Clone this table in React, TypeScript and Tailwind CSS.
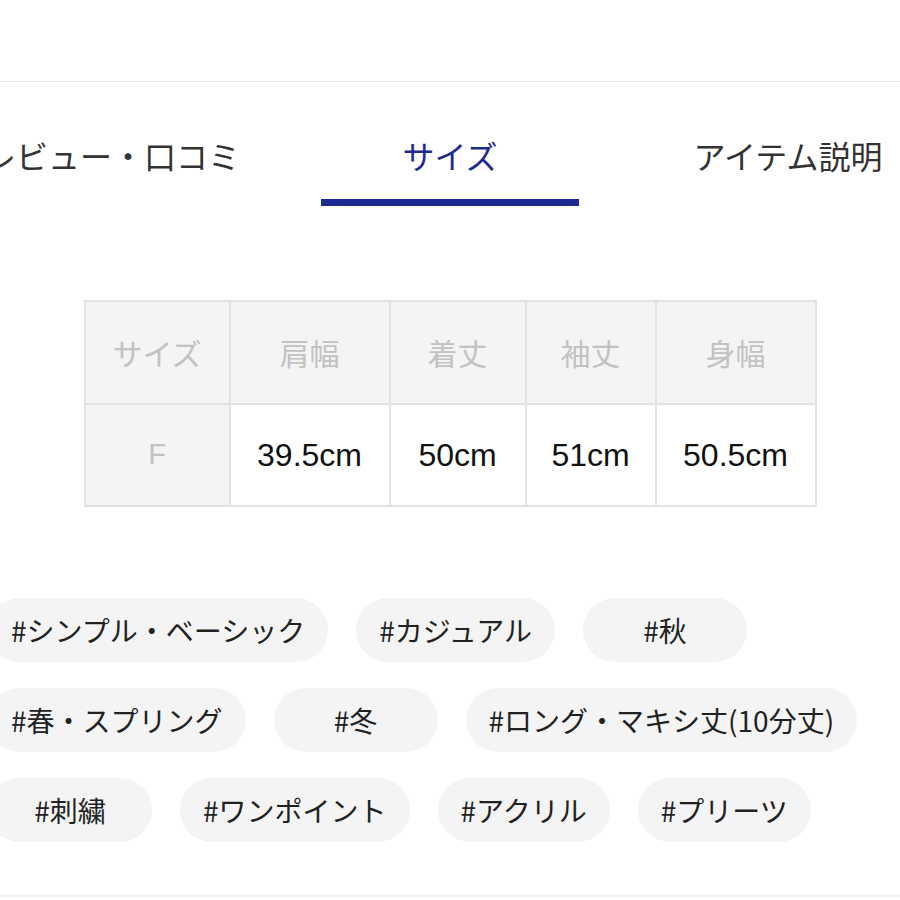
const tabs = ['レビュー・口コミ', 'サイズ', 'アイテム説明'];

const headers = ['サイズ', '肩幅', '着丈', '袖丈', '身幅'];
const values = ['39.5cm', '50cm', '51cm', '50.5cm'];

const tagRows = [
  ['#シンプル・ベーシック', '#カジュアル', '#秋'],
  ['#春・スプリング', '#冬', '#ロング・マキシ丈(10分丈)'],
  ['#刺繍', '#ワンポイント', '#アクリル', '#プリーツ'],
];

function Tag({ label }: { label: string }) {
  return (
    <div className="h-[64px] min-w-[164px] px-[23px] rounded-full bg-[#f4f4f4] flex items-center justify-center shrink-0">
      <span className="text-[28px] leading-none text-[#222]">{label}</span>
    </div>
  );
}

export default function App() {
  return (
    <div className="w-[900px] h-[900px] overflow-hidden bg-white font-['Noto_Sans_CJK_JP',sans-serif]">
      <div className="h-[81px]" />
      <div className="border-t border-[#e6e6e6]" />

      {/* tabs */}
      <div className="flex justify-center pt-[57px]">
        {tabs.map((t, i) => (
          <div key={t} className="w-[338px] shrink-0 flex flex-col items-center">
            <span className={`text-[32px] leading-none whitespace-nowrap ${i === 1 ? 'text-[#1e2b8f]' : 'text-[#333]'}`}>{t}</span>
            <div className={`mt-[28px] h-[7px] w-[258px] ${i === 1 ? 'bg-[#1a2a91]' : 'bg-transparent'}`} />
          </div>
        ))}
      </div>

      {/* size table */}
      <div className="flex justify-center mt-[94px]">
        <div className="grid grid-cols-[143px_158px_134px_128px_158px] grid-rows-[101px_100px] gap-[2px] p-[2px] bg-[#e2e2e2]">
          {headers.map((h) => (
            <div key={h} className="bg-[#f4f4f4] flex items-center justify-center text-[30px] text-[#c2c2c2]">
              {h}
            </div>
          ))}
          <div className="bg-[#f4f4f4] flex items-center justify-center text-[29px] text-[#c2c2c2] font-['Liberation_Sans',sans-serif]">
            F
          </div>
          {values.map((v) => (
            <div key={v} className="bg-white flex items-center justify-center text-[32px] text-[#111] font-['Liberation_Sans',sans-serif]">
              {v}
            </div>
          ))}
        </div>
      </div>

      {/* tags */}
      <div className="mt-[91px] ml-[-12px] flex flex-col gap-[26px]">
        {tagRows.map((row, r) => (
          <div key={r} className="flex gap-[28px]">
            {row.map((t) => (
              <Tag key={t} label={t} />
            ))}
          </div>
        ))}
      </div>

      <div className="mt-[53px] border-t-2 border-[#f0f0f0]" />
    </div>
  );
}
